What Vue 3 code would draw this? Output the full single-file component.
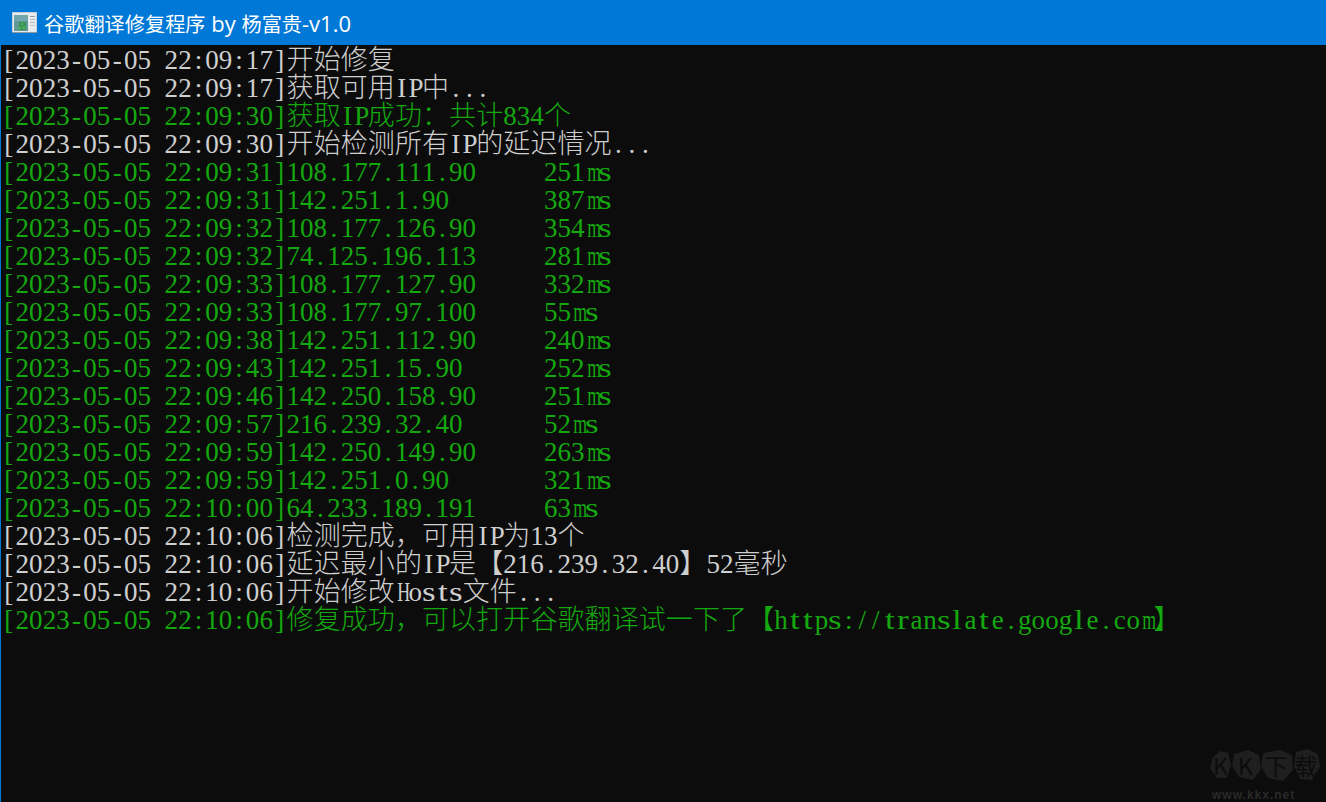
<script setup>
const WHITE = 'white'
const GREEN = 'green'

const row = (time, text, tone = WHITE) => ({ text: `[2023-05-05 ${time}]${text}`, tone })
const ping = (time, ip, ms) => row(time, ip.padEnd(19, ' ') + ms, GREEN)

const rows = [
  row('22:09:17', '开始修复'),
  row('22:09:17', '获取可用IP中...'),
  row('22:09:30', '获取IP成功：共计834个', GREEN),
  row('22:09:30', '开始检测所有IP的延迟情况...'),
  ping('22:09:31', '108.177.111.90', '251ms'),
  ping('22:09:31', '142.251.1.90', '387ms'),
  ping('22:09:32', '108.177.126.90', '354ms'),
  ping('22:09:32', '74.125.196.113', '281ms'),
  ping('22:09:33', '108.177.127.90', '332ms'),
  ping('22:09:33', '108.177.97.100', '55ms'),
  ping('22:09:38', '142.251.112.90', '240ms'),
  ping('22:09:43', '142.251.15.90', '252ms'),
  ping('22:09:46', '142.250.158.90', '251ms'),
  ping('22:09:57', '216.239.32.40', '52ms'),
  ping('22:09:59', '142.250.149.90', '263ms'),
  ping('22:09:59', '142.251.0.90', '321ms'),
  ping('22:10:00', '64.233.189.191', '63ms'),
  row('22:10:06', '检测完成，可用IP为13个'),
  row('22:10:06', '延迟最小的IP是【216.239.32.40】52毫秒'),
  row('22:10:06', '开始修改Hosts文件...'),
  row('22:10:06', '修复成功，可以打开谷歌翻译试一下了【https://translate.google.com】', GREEN)
]

// console grid: half cell for latin, full cell for cjk
const cellClass = (ch) => {
  if (ch.charCodeAt(0) > 255) return 'full'
  if ('mH'.includes(ch)) return 'half squeeze'
  if ('trsl'.includes(ch)) return 'half stretch'
  return 'half'
}
</script>

<template>
  <div class="window">
    <header class="titlebar">
      <svg class="app-icon" width="25" height="21" viewBox="0 0 25 21">
        <rect width="25" height="21" fill="#c9cfd8" />
        <rect x="1" y="1" width="23" height="19" fill="#e8ebee" />
        <rect x="2" y="3" width="14" height="16" fill="#5f9a98" />
        <rect x="2" y="3" width="14" height="6" fill="#74a7ad" />
        <rect x="7" y="10" width="7" height="8" fill="#3d8f5c" />
        <rect x="9" y="11" width="2" height="2" fill="#46b84c" />
        <rect x="6" y="15" width="3" height="2" fill="#46b84c" />
        <rect x="11" y="14" width="2" height="3" fill="#46b84c" />
        <rect x="18" y="4" width="5" height="1" fill="#8f9aa3" />
        <rect x="18" y="7" width="5" height="1" fill="#b5bdc3" />
        <rect x="18" y="10" width="5" height="1" fill="#b5bdc3" />
        <rect x="18" y="13" width="5" height="1" fill="#c3cace" />
        <rect y="20" width="25" height="1" fill="#8f9aa3" />
      </svg>
      <span class="title">谷歌翻译修复程序<span class="latin"> by </span>杨富贵<span class="latin">-v1.0</span></span>
    </header>

    <main class="console">
      <div v-for="(item, i) in rows" :key="i" class="line" :class="item.tone">
        <span v-for="(ch, j) in item.text" :key="j" class="cell" :class="cellClass(ch)">{{ ch }}</span>
      </div>
    </main>

    <div class="watermark">
      <svg class="rocks" width="110" height="34" viewBox="0 0 110 34">
        <polygon points="3,9 10,3 18,5 21,17 17,30 7,30 0,20" />
        <polygon points="24,6 38,2 49,7 51,21 43,32 29,29 22,18" />
        <polygon points="53,5 70,2 82,7 83,22 73,33 58,30 51,18" />
        <polygon points="86,4 98,1 108,6 110,19 102,32 90,31 84,18" />
      </svg>
      <div class="mark-text">
        <span v-for="ch in 'KK下载'" :key="ch">{{ ch }}</span>
      </div>
      <div class="mark-url">www.kkx.net</div>
    </div>
  </div>
</template>

<style scoped>
.window {
  position: relative;
  height: 100vh;
  display: flex;
  flex-direction: column;
  overflow: hidden;
  background: #0c0c0c;
}

.titlebar {
  height: 45px;
  flex: none;
  display: flex;
  align-items: center;
  gap: 7px;
  padding-left: 12px;
  background: #0078d7;
}
.app-icon {
  flex: none;
}
.title {
  color: #fff;
  font-family: "Noto Sans CJK SC", sans-serif;
  font-size: 20.2px;
}
.latin {
  font-family: "Open Sans", sans-serif;
  font-size: 22px;
  white-space: pre;
}

.console {
  flex: 1;
  border-left: 1px solid #0078d7;
  padding-top: 1px;
  padding-left: 1px;
  font-family: "Liberation Serif", "Noto Sans CJK SC", serif;
  font-size: 27px;
}
.line {
  height: 28px;
  line-height: 28px;
  white-space: pre;
}
.white {
  color: #cfcfcf;
}
.green {
  color: #14a80f;
}
.cell {
  display: inline-block;
  text-align: center;
  white-space: pre;
}
.half {
  width: 13.55px;
}
.full {
  width: 27.1px;
  line-height: 20px;
  font-family: "Noto Sans CJK SC", sans-serif;
  font-weight: 300;
  font-size: 27px;
}
.squeeze {
  transform: scaleX(0.66);
}
.stretch {
  transform: scaleX(1.3);
}

.watermark {
  position: absolute;
  left: 1210px;
  top: 748px;
  width: 110px;
}
.rocks {
  display: block;
  fill: #1f1f1f;
}
.mark-text {
  position: absolute;
  left: 0;
  top: 0;
  width: 110px;
  height: 34px;
  display: grid;
  grid-template-columns: 21px 29px 32px 28px;
  align-items: center;
  justify-items: center;
  color: #0c0c0c;
  font-family: "Noto Sans CJK SC", sans-serif;
  font-size: 23px;
}
.mark-url {
  margin-top: 7px;
  margin-left: 2px;
  color: #2a2a2a;
  font-family: "Liberation Sans", sans-serif;
  font-size: 12px;
  line-height: 12px;
  font-weight: 700;
  letter-spacing: 1px;
  white-space: nowrap;
}
</style>

<style>
html,
body {
  margin: 0;
  background: #0c0c0c;
}
</style>
